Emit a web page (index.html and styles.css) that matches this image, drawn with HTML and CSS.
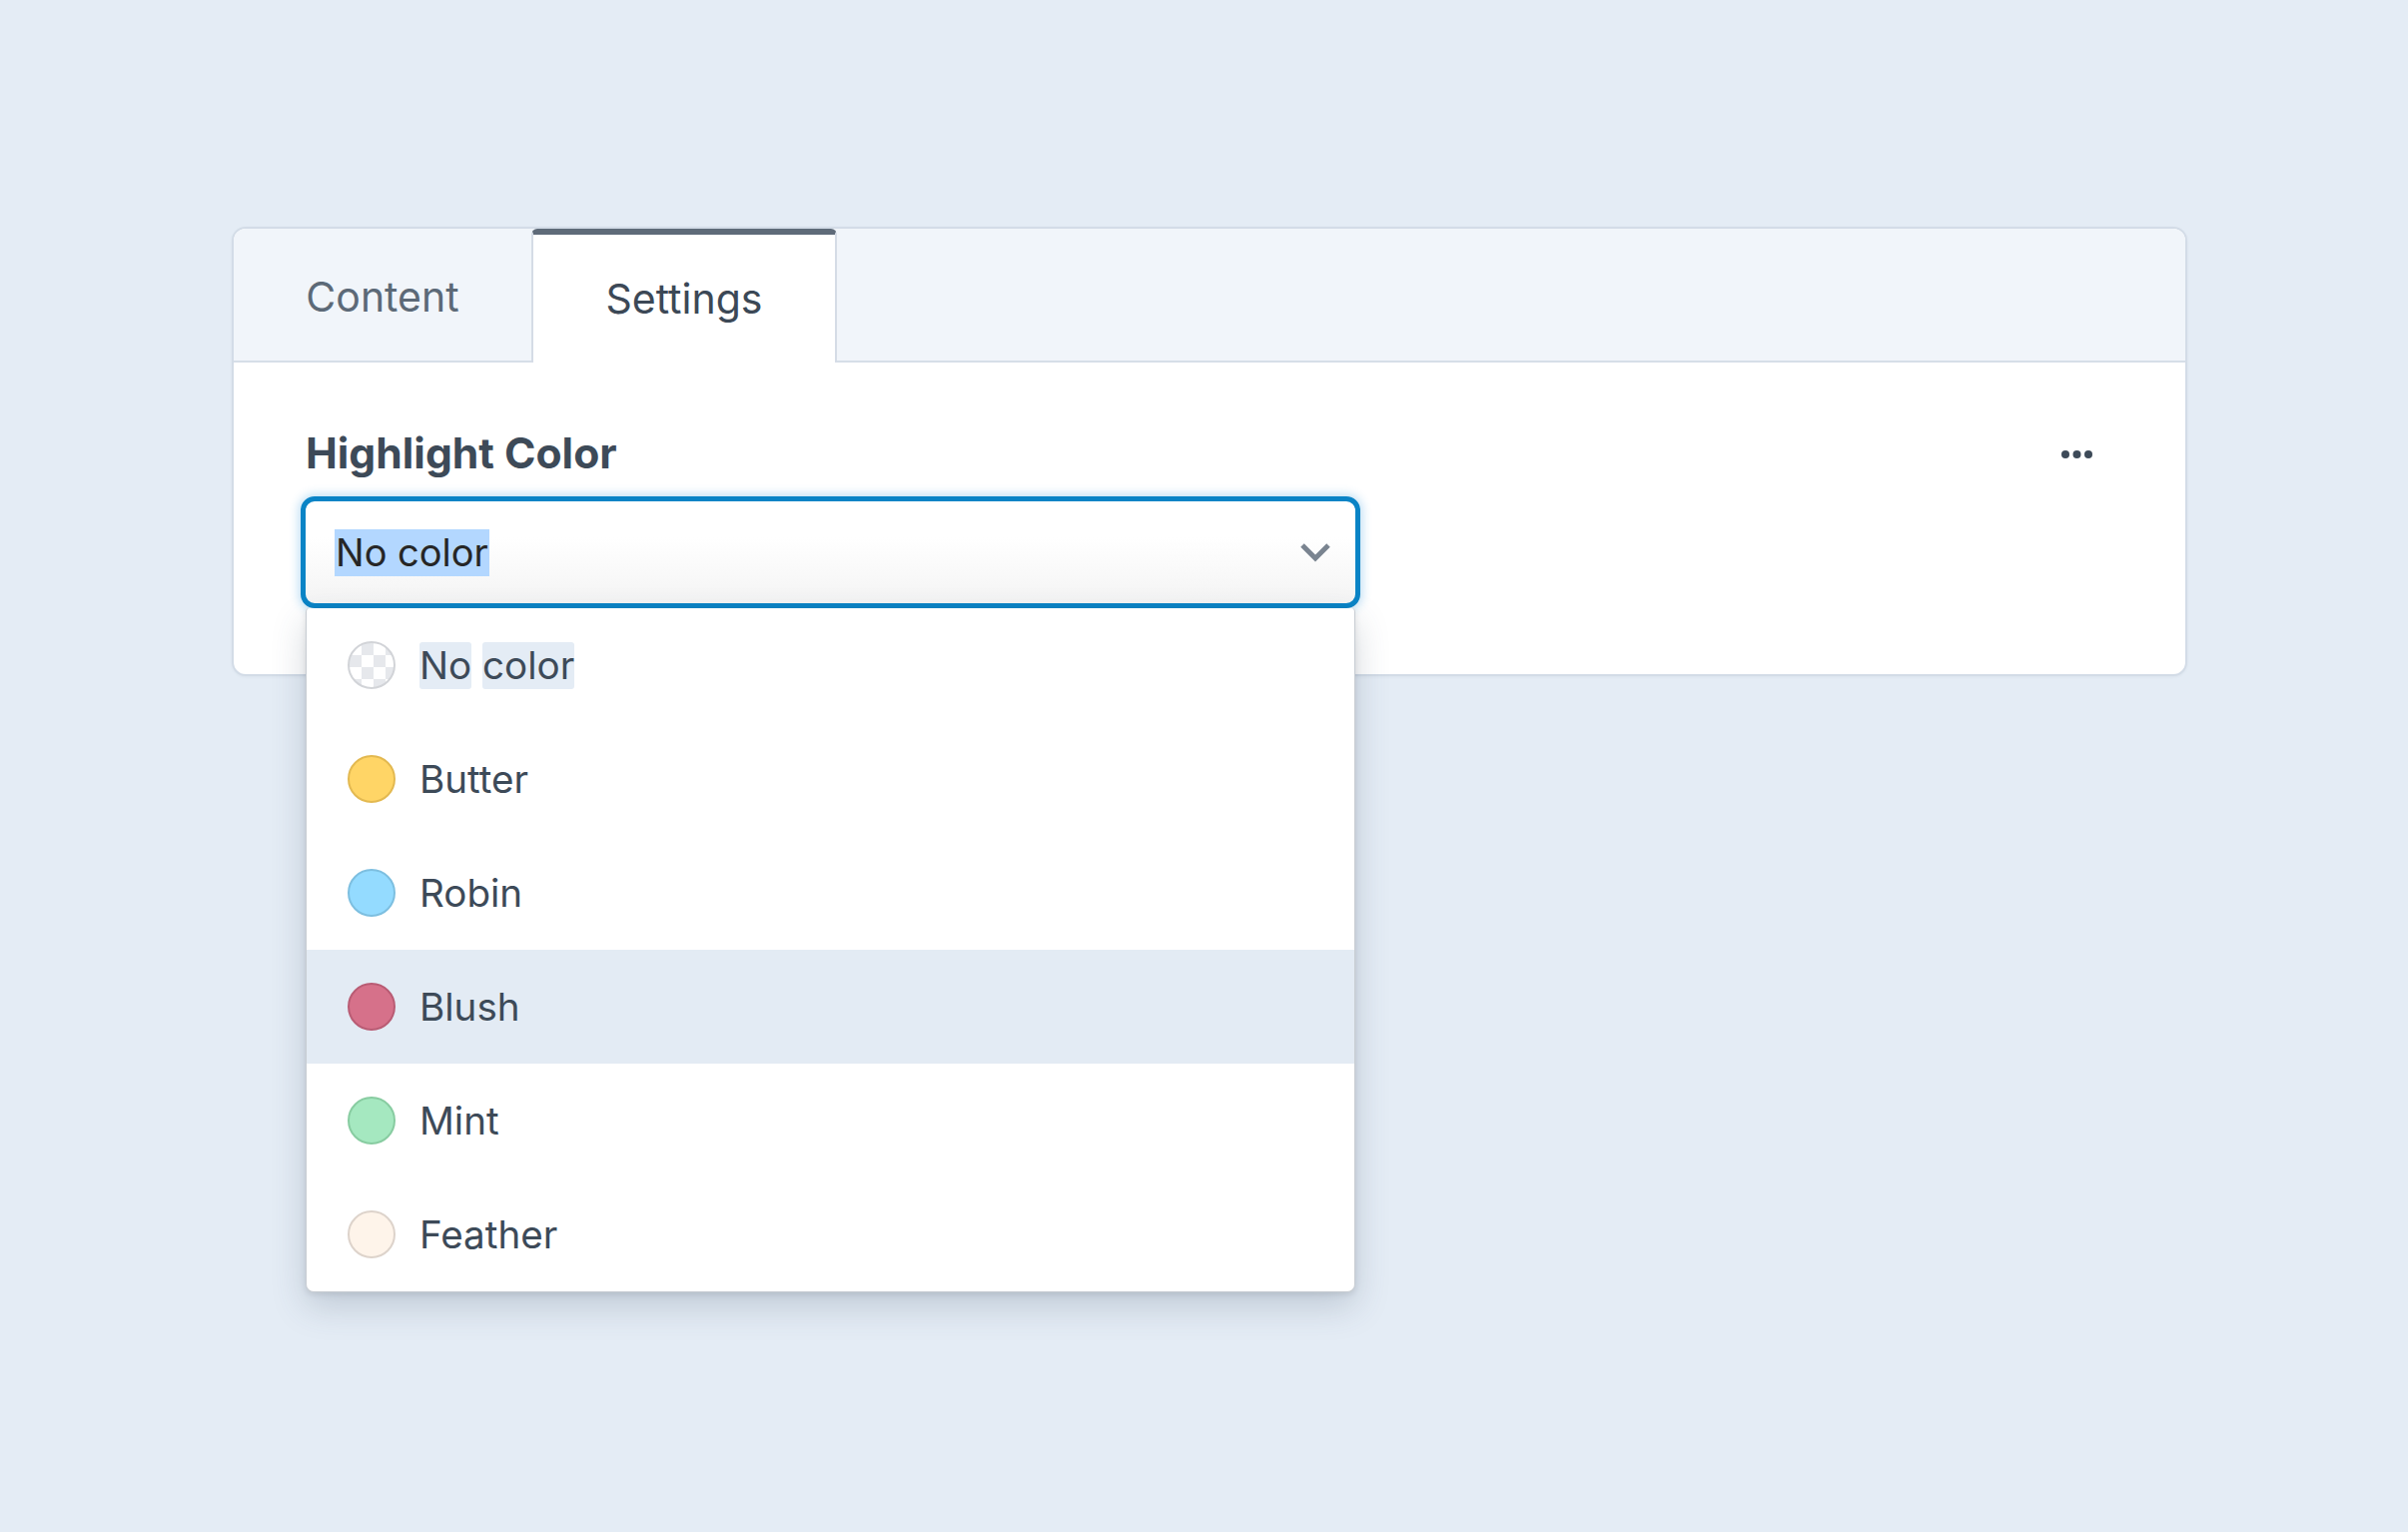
FILE: index.html
```html
<!DOCTYPE html>
<html lang="en">
<head>
<meta charset="utf-8">
<title>Highlight Color</title>
<link rel="stylesheet" href="styles.css">
</head>
<body>
  <div class="card">
    <div class="tabs">
      <div class="tab">Content</div>
      <div class="tab tab-active">Settings</div>
    </div>
    <div class="card-body">
      <div class="field-head">
        <div class="label">Highlight Color</div>
        <svg class="dots" width="32" height="8" viewBox="0 0 32 8"><circle cx="4" cy="4" r="4"/><circle cx="15.5" cy="4" r="4"/><circle cx="27" cy="4" r="4"/></svg>
      </div>
      <div class="select">
        <span class="select-value">No color</span>
        <svg class="chevron" width="32" height="20" viewBox="0 0 32 20"><polyline points="3,3 16,16 29,3" fill="none" stroke="#7a8490" stroke-width="5"/></svg>
        <div class="menu">
          <div class="option"><span class="swatch swatch-none"></span><span class="opt-text"><span class="hl">No</span> <span class="hl">color</span></span></div>
          <div class="option"><span class="swatch swatch-butter"></span><span class="opt-text">Butter</span></div>
          <div class="option"><span class="swatch swatch-robin"></span><span class="opt-text">Robin</span></div>
          <div class="option option-hover"><span class="swatch swatch-blush"></span><span class="opt-text">Blush</span></div>
          <div class="option"><span class="swatch swatch-mint"></span><span class="opt-text">Mint</span></div>
          <div class="option"><span class="swatch swatch-feather"></span><span class="opt-text">Feather</span></div>
        </div>
      </div>
    </div>
  </div>
</body>
</html>
```

FILE: styles.css
```css
* { box-sizing: border-box; }

html, body {
  margin: 0;
  height: 100%;
}

body {
  background: #e4ecf5;
  font-family: Inter, "Noto Sans", "Liberation Sans", sans-serif;
  padding: 227px 0 0 232px;
  overflow: hidden;
}

.card {
  width: 1958px;
  height: 450px;
  background: #ffffff;
  border: 2px solid #d3dce7;
  border-radius: 14px;
  box-shadow: 0 1px 3px rgba(60, 80, 110, 0.06);
}

.tabs {
  display: flex;
  height: 134px;
  background: #f1f5fa;
  border-bottom: 2px solid #d6dee8;
  border-radius: 12px 12px 0 0;
}

.tab {
  width: 298px;
  height: 132px;
  display: flex;
  align-items: center;
  justify-content: center;
  font-size: 41px;
  color: #5c6977;
  padding-top: 3px;
}

.tab-active {
  width: 306px;
  height: 134px;
  background: #ffffff;
  color: #3c4856;
  border-top: 6px solid #5f6b79;
  border-left: 2px solid #d5dce6;
  border-right: 2px solid #d5dce6;
  border-radius: 6px 6px 0 0;
  padding-top: 0;
  position: relative;
}

.card-body {
  padding: 67px 92px 0 67px;
}

.field-head {
  display: flex;
  align-items: center;
  justify-content: space-between;
  height: 48px;
}

.label {
  font-size: 42.6px;
  font-weight: 700;
  line-height: 48px;
  color: #3d4a58;
  padding-left: 5px;
}

.dots {
  fill: #3d4a58;
  margin-top: 2px;
}

.select {
  position: relative;
  margin-top: 19px;
  width: 1061px;
  height: 112px;
  border: 5px solid #0a84c6;
  border-radius: 14px;
  background: linear-gradient(#ffffff 35%, #f4f4f4);
  box-shadow: 0 0 10px 2px rgba(40, 150, 220, 0.3);
  display: flex;
  align-items: center;
  justify-content: space-between;
  padding: 0 24px 0 29px;
}

.select-value {
  font-size: 38px;
  line-height: 47px;
  color: #262626;
  background: #b3d7ff;
  padding: 0 1px;
}

.menu {
  position: absolute;
  left: 0;
  top: calc(100% + 5px);
  width: 1051px;
  background: #ffffff;
  border: 1px solid #c8cdd3;
  border-top: none;
  border-radius: 4px 4px 8px 8px;
  box-shadow: 0 14px 34px rgba(60, 78, 100, 0.22), 0 2px 6px rgba(0, 0, 0, 0.1);
  z-index: 5;
}

.option {
  height: 114px;
  display: flex;
  align-items: center;
  gap: 24px;
  padding-left: 41px;
  font-size: 38.6px;
  color: #3d4a58;
}

.option-hover {
  background: #e3ebf4;
}

.opt-text {
  line-height: 47px;
}

.hl {
  display: inline-block;
  background: #e4ecf5;
  border-radius: 3px;
  line-height: 47px;
}

.swatch {
  width: 48px;
  height: 48px;
  border-radius: 50%;
  border: 2px solid;
  flex: none;
}

.swatch-none {
  border-color: #d2d4d8;
  background-color: #ffffff;
  background-image: conic-gradient(#e6e8ec 0 25%, #ffffff 0 50%, #e6e8ec 0 75%, #ffffff 0);
  background-size: 24px 24px;
  background-position: 0 0;
}

.swatch-butter { background: #ffd566; border-color: #e3b951; }
.swatch-robin { background: #94dbff; border-color: #7dbfe0; }
.swatch-blush { background: #d6718a; border-color: #b95c74; }
.swatch-mint { background: #a5e8c0; border-color: #88cca1; }
.swatch-feather { background: #fef4ea; border-color: #ddd3cb; }
```
